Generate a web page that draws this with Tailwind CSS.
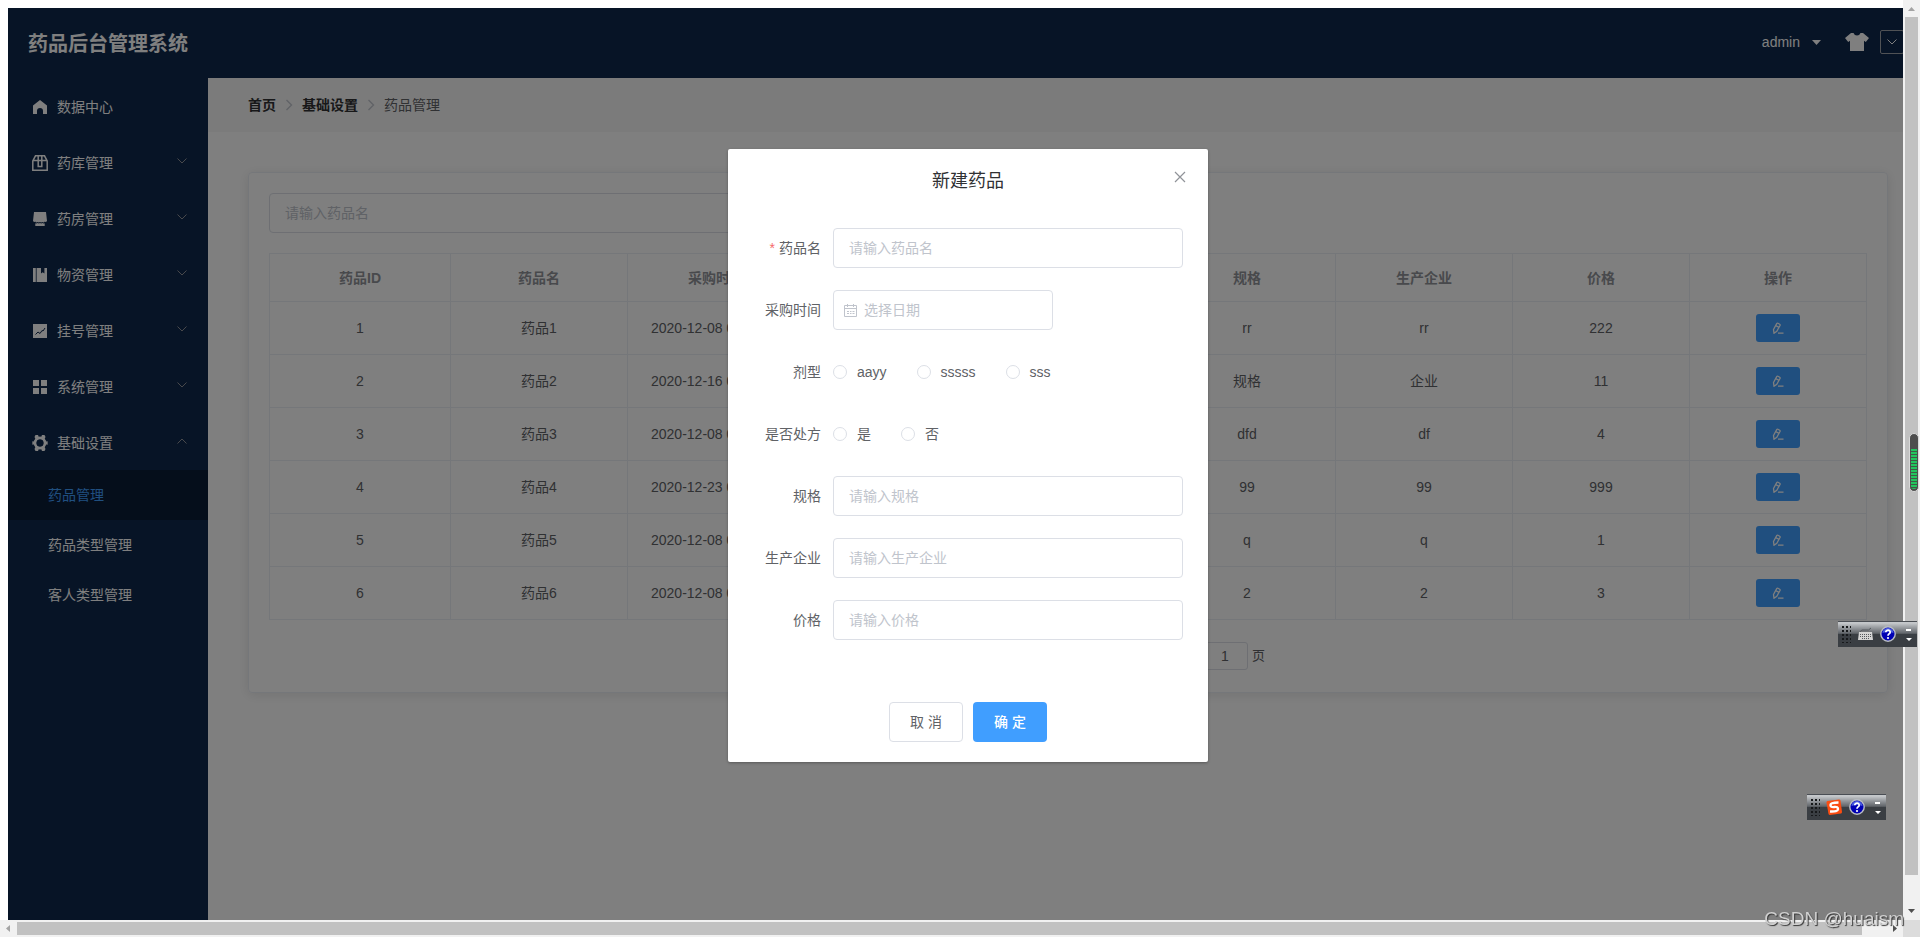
<!DOCTYPE html>
<html lang="zh-CN">
<head>
<meta charset="utf-8">
<title>药品后台管理系统</title>
<script src="https://cdn.jsdelivr.net/npm/@tailwindcss/browser@4"></script>
</head>
<body class="grid h-screen grid-cols-[minmax(0,1fr)_17px] grid-rows-[minmax(0,1fr)_17px] overflow-hidden bg-white font-['Liberation_Sans','Noto_Sans_CJK_SC',sans-serif] text-sm text-[#606266]">

<svg class="hidden" aria-hidden="true">
  <symbol id="down" viewBox="0 0 12 12"><path d="M1.500 3.500 6 8l4.500-4.500" fill="none" stroke="currentColor"/></symbol>
  <symbol id="right" viewBox="0 0 12 12"><path d="M3.500 1 8.500 6l-5 5" fill="none" stroke="currentColor" stroke-width="1.300"/></symbol>
  <symbol id="edit" viewBox="0 0 12 12"><path d="M1.500 7.500 4.700 1.600Q5.200.9 5.900 1.300L7.700 2.300Q8.400 2.700 8 3.500L4.800 9.200 2 11.200ZM3.800 3.600 6.800 5.300M6 11.200h5.500" fill="none" stroke="currentColor" stroke-width="1.300"/></symbol>
  <symbol id="help" viewBox="0 0 16 16"><circle cx="8" cy="8" r="7.200" fill="#0000b4" stroke="#b9bdc4" stroke-width="1.400"/><path d="M2.500 7a5.500 5 0 0 1 11 0Q8 5 2.500 7Z" fill="#4a5ce0"/><path d="M5.800 6.200a2.200 2 0 1 1 3.400 1.600Q8 8.500 8 9.800" fill="none" stroke="#fff" stroke-width="1.700"/><circle cx="8" cy="12" r="1.100" fill="#fff"/></symbol>
  <symbol id="grip" viewBox="0 0 9 17"><g fill="none" stroke="#17191b" stroke-width="2" stroke-dasharray="2 2"><path d="M1 0v17M5 0v17"/><path d="M8.500 0v17" stroke-width="1"/></g></symbol>
  <symbol id="menu" viewBox="0 0 6 13"><path d="M0 1h5v2H0zM0 10h6L3 13z" fill="#fff"/></symbol>
</svg>

<div class="overflow-hidden pt-2 pl-2">
  <div class="relative flex h-full w-screen flex-col bg-white">
    <header class="flex h-[70px] shrink-0 items-center bg-[#0e284c] pr-6 pb-[2px] pl-5 text-white">
      <h1 class="flex-1 pt-1 text-xl font-bold">药品后台管理系统</h1>
      <button class="mr-6 flex items-center gap-3" type="button">admin
        <svg class="h-[5px] w-[9px]" viewBox="0 0 9 5"><path d="M0 0h9L4.500 5z" fill="currentColor"/></svg>
      </button>
      <svg class="mr-[11px] h-[18px] w-6" viewBox="0 0 24 18" fill="currentColor"><path d="M6 0h2.500Q9.500 2.500 12 2.500T15.500 0H18l6 5-3.200 4L19 7.800V18H5V7.800L3.200 9 0 5Z"/></svg>
      <button class="flex h-6 w-6 items-center justify-center rounded-xs border border-[#a0a4aa]" type="button" aria-label="主题"><svg class="size-3"><use href="#down"/></svg></button>
    </header>

    <div class="flex min-h-0 flex-1">
      <aside class="w-[200px] shrink-0 bg-[#0e284c] text-white">
        <nav>
          <a href="#" class="flex h-14 items-center gap-[5px] px-5 pt-px"><svg class="size-6" viewBox="0 0 24 24" fill="currentColor"><path d="M12 5l7 5.500V19h-4v-3a3 3 0 0 0-6 0v3H5v-8.500z"/></svg>数据中心</a>
          <a href="#" class="flex h-14 items-center gap-[5px] px-5 pt-px"><svg class="size-6" viewBox="0 0 24 24" fill="none" stroke="currentColor" stroke-width="1.500"><path d="M4.800 10v9.200h14.400V10L16.500 4.800h-9zM4.800 9.500h14.400M10.200 5v10.500h3.600V5"/></svg><span class="flex-1">药库管理</span><svg class="mb-1 size-3 text-[#909399]"><use href="#down"/></svg></a>
          <a href="#" class="flex h-14 items-center gap-[5px] px-5 pt-px"><svg class="size-6" viewBox="0 0 24 24" fill="currentColor"><path d="M6 5h12l1 9q-1.200 1.600-2.400.6V15q-1.200.9-2.300 0-1.200.9-2.300 0-1.200.9-2.300 0-1.200.9-2.300 0v-.4Q6.200 15.600 5 14zM7.300 16.200q1.300.6 2.300-.2 1.200.9 2.400 0 1.200.9 2.400 0 1 .8 2.300.2V19H7.300z"/></svg><span class="flex-1">药房管理</span><svg class="mb-1 size-3 text-[#909399]"><use href="#down"/></svg></a>
          <a href="#" class="flex h-14 items-center gap-[5px] px-5 pt-px"><svg class="size-6" viewBox="0 0 24 24" fill="currentColor"><path d="M5 5h2.800v14H5zM8.600 5H13v5.500l1.700-1.200 1.700 1.200V5H19v14H8.600z"/></svg><span class="flex-1">物资管理</span><svg class="mb-1 size-3 text-[#909399]"><use href="#down"/></svg></a>
          <a href="#" class="flex h-14 items-center gap-[5px] px-5 pt-px"><svg class="size-6" viewBox="0 0 24 24"><path d="M5 5h14v14H5z" fill="currentColor"/><path d="M7.500 15.500l2.500-2.500 2 1.500 2-3 1 .5L17 9" fill="none" stroke="#0e284c"/></svg><span class="flex-1">挂号管理</span><svg class="mb-1 size-3 text-[#909399]"><use href="#down"/></svg></a>
          <a href="#" class="flex h-14 items-center gap-[5px] px-5 pt-px"><svg class="size-6" viewBox="0 0 24 24" fill="currentColor"><path d="M5 5h6v6H5zM13 5h6v6h-6zM5 13h6v6H5zM13 13h6v6h-6z"/></svg><span class="flex-1">系统管理</span><svg class="mb-1 size-3 text-[#909399]"><use href="#down"/></svg></a>
          <a href="#" class="flex h-14 items-center gap-[5px] px-5 pt-px"><svg class="size-6" viewBox="0 0 24 24"><circle cx="12" cy="12" r="4.900" fill="none" stroke="currentColor" stroke-width="3"/><path d="M7.500 4h2.500l.8 2h2.400l.8-2h2.500l1 2-1 2H7.500l-1-2zM7.500 20h2.500l.8-2h2.400l.8 2h2.500l1-2-1-2H7.500l-1 2zM4 10.500h3v3H4l.5-1.500zM20 10.500h-3v3h3l-.5-1.500z" fill="currentColor"/><circle cx="12" cy="12" r="3.500" fill="#0e284c"/></svg><span class="flex-1">基础设置</span><svg class="mb-1 size-3 rotate-180 text-[#909399]"><use href="#down"/></svg></a>
          <a href="#" class="flex h-[50px] items-center bg-[#0a1c36] pl-10 text-[#409eff]">药品管理</a>
          <a href="#" class="flex h-[50px] items-center pl-10">药品类型管理</a>
          <a href="#" class="flex h-[50px] items-center pl-10">客人类型管理</a>
        </nav>
      </aside>

      <main class="min-w-0 flex-1">
        <nav class="flex h-[54px] items-center bg-[#f6f6f6] px-10" aria-label="面包屑">
          <a href="#" class="font-bold text-[#303133]">首页</a>
          <svg class="mx-[7px] size-3 text-[#c0c4cc]"><use href="#right"/></svg>
          <a href="#" class="font-bold text-[#303133]">基础设置</a>
          <svg class="mx-[7px] size-3 text-[#c0c4cc]"><use href="#right"/></svg>
          <span>药品管理</span>
        </nav>

        <section class="m-10 rounded-sm border border-[#ebeef5] px-5 pt-5 pb-[22px] shadow-[0_2px_12px_rgba(0,0,0,0.1)]">
          <input class="mb-5 block h-10 w-1/2 rounded-sm border border-[#dcdfe6] px-[15px] placeholder:text-[#c0c4cc]" type="text" aria-label="药品名" placeholder="请输入药品名">
          <table class="w-full table-fixed border-collapse text-center [&_button]:inline-flex [&_button]:h-7 [&_button]:w-11 [&_button]:items-center [&_button]:justify-center [&_button]:rounded-[3px] [&_button]:bg-[#409eff] [&_button]:align-middle [&_button]:text-white [&_svg]:size-3 [&_td]:border [&_td]:border-[#ebeef5] [&_th]:border [&_th]:border-[#ebeef5]">
            <colgroup><col class="w-[181px]"><col><col><col><col><col><col><col><col></colgroup>
            <thead><tr class="h-12 text-[#909399]"><th>药品ID</th><th>药品名</th><th>采购时间</th><th>剂型</th><th>是否处方</th><th>规格</th><th>生产企业</th><th>价格</th><th>操作</th></tr></thead>
            <tbody>
              <tr class="h-[53px]"><td>1</td><td>药品1</td><td>2020-12-08 00:00:00</td><td>aayy</td><td>是</td><td>rr</td><td>rr</td><td>222</td><td><button type="button" aria-label="编辑"><svg><use href="#edit"/></svg></button></td></tr>
              <tr class="h-[53px]"><td>2</td><td>药品2</td><td>2020-12-16 00:00:00</td><td>aayy</td><td>是</td><td>规格</td><td>企业</td><td>11</td><td><button type="button" aria-label="编辑"><svg><use href="#edit"/></svg></button></td></tr>
              <tr class="h-[53px]"><td>3</td><td>药品3</td><td>2020-12-08 00:00:00</td><td>aayy</td><td>是</td><td>dfd</td><td>df</td><td>4</td><td><button type="button" aria-label="编辑"><svg><use href="#edit"/></svg></button></td></tr>
              <tr class="h-[53px]"><td>4</td><td>药品4</td><td>2020-12-23 00:00:00</td><td>sssss</td><td>否</td><td>99</td><td>99</td><td>999</td><td><button type="button" aria-label="编辑"><svg><use href="#edit"/></svg></button></td></tr>
              <tr class="h-[53px]"><td>5</td><td>药品5</td><td>2020-12-08 00:00:00</td><td>sss</td><td>是</td><td>q</td><td>q</td><td>1</td><td><button type="button" aria-label="编辑"><svg><use href="#edit"/></svg></button></td></tr>
              <tr class="h-[53px]"><td>6</td><td>药品6</td><td>2020-12-08 00:00:00</td><td>sss</td><td>否</td><td>2</td><td>2</td><td>3</td><td><button type="button" aria-label="编辑"><svg><use href="#edit"/></svg></button></td></tr>
            </tbody>
          </table>
          <div class="mx-auto mt-[22px] flex h-7 w-[394px] items-center justify-end text-[13px]">
            <label class="flex items-center gap-1">前往<input class="h-7 w-[46px] rounded-[3px] border border-[#dcdfe6] text-center text-sm" type="text" value="1">页</label>
          </div>
        </section>
      </main>
    </div>

    <div class="absolute inset-0 bg-black/50">
      <form class="mx-auto mt-[141px] w-[480px] rounded-xs bg-white py-5 shadow-[0_1px_3px_rgba(0,0,0,0.3)]" role="dialog" aria-labelledby="dialog-title">
        <div class="relative mb-[35px] text-center">
          <h2 id="dialog-title" class="text-lg leading-6 text-[#303133]">新建药品</h2>
          <button class="absolute top-0 right-5 text-[#909399]" type="button" aria-label="关闭"><svg class="size-4" viewBox="0 0 16 16"><path d="M3 3l10 10M13 3 3 13" fill="none" stroke="currentColor" stroke-width="1.200"/></svg></button>
        </div>
        <div class="grid grid-cols-[68px_350px] items-center justify-end gap-x-3 gap-y-[22px] pr-[25px] [&_input[type=radio]]:size-[14px] [&_input[type=radio]]:appearance-none [&_input[type=radio]]:rounded-full [&_input[type=radio]]:border [&_input[type=radio]]:border-[#dcdfe6] [&_input[type=text]]:h-10 [&_input[type=text]]:rounded-sm [&_input[type=text]]:border [&_input[type=text]]:border-[#dcdfe6] [&_input[type=text]]:px-[15px] [&_input[type=text]]:placeholder:text-[#c0c4cc]">
          <label class="text-right" for="name"><span class="mr-1 text-[#f56c6c]">*</span>药品名</label>
          <input id="name" type="text" placeholder="请输入药品名">
          <label class="text-right" for="date">采购时间</label>
          <div class="flex h-10 w-[220px] items-center gap-[7px] rounded-sm border border-[#dcdfe6] pl-[10px]">
            <svg class="size-[13px] shrink-0 text-[#c0c4cc]" viewBox="0 0 13 13" fill="none" stroke="currentColor"><path d="M.5 1.500h12v11H.5zM.5 4.500h12M3.500 0v3M9.500 0v3M3 7.500h2M6 7.500h1.500M8.500 7.500h2M3 9.500h2M6 9.500h1.500M8.500 9.500h2"/></svg>
            <input id="date" class="w-full min-w-0 border-0! px-0! outline-none" type="text" placeholder="选择日期">
          </div>
          <span class="text-right">剂型</span>
          <div class="flex h-10 items-center gap-[30px]">
            <label class="flex items-center gap-[10px]"><input type="radio" name="type">aayy</label>
            <label class="flex items-center gap-[10px]"><input type="radio" name="type">sssss</label>
            <label class="flex items-center gap-[10px]"><input type="radio" name="type">sss</label>
          </div>
          <span class="text-right">是否处方</span>
          <div class="flex h-10 items-center gap-[30px]">
            <label class="flex items-center gap-[10px]"><input type="radio" name="rx">是</label>
            <label class="flex items-center gap-[10px]"><input type="radio" name="rx">否</label>
          </div>
          <label class="text-right" for="spec">规格</label>
          <input id="spec" type="text" placeholder="请输入规格">
          <label class="text-right" for="maker">生产企业</label>
          <input id="maker" type="text" placeholder="请输入生产企业">
          <label class="text-right" for="price">价格</label>
          <input id="price" type="text" placeholder="请输入价格">
        </div>
        <div class="mt-[62px] flex justify-center gap-[10px]">
          <button class="h-10 w-[74px] rounded-sm border border-[#dcdfe6]" type="button">取 消</button>
          <button class="h-10 w-[74px] rounded-sm bg-[#409eff] font-medium text-white" type="submit">确 定</button>
        </div>
      </form>
    </div>
  </div>
</div>

<!-- Vertical scroll bar -->
<div class="flex flex-col items-center bg-[#f1f1f1]">
  <svg class="h-[17px] w-[17px] shrink-0 text-[#a3a3a3]" viewBox="0 0 17 17"><path d="M5 11h7L8.500 7z" fill="currentColor"/></svg>
  <div class="w-[13px] flex-1 bg-[#c1c1c1]"></div>
  <svg class="mt-7 h-[17px] w-[17px] shrink-0 text-[#505050]" viewBox="0 0 17 17"><path d="M5 6h7l-3.500 4z" fill="currentColor"/></svg>
</div>
<!-- Horizontal scroll bar -->
<div class="flex items-center bg-[#f1f1f1]">
  <svg class="h-[17px] w-[17px] shrink-0 text-[#a3a3a3]" viewBox="0 0 17 17"><path d="M10 5v7L6 8.500z" fill="currentColor"/></svg>
  <div class="h-[13px] flex-1 bg-[#c1c1c1]"></div>
  <svg class="ml-6 h-[17px] w-[17px] shrink-0 text-[#505050]" viewBox="0 0 17 17"><path d="M7 5v7l4-3.500z" fill="currentColor"/></svg>
</div>
<div class="bg-[#dcdcdc]"></div>

<!-- Desktop widgets floating over the window -->
<div class="fixed top-[621px] right-[3px] flex h-[26px] w-[79px] items-center border-t border-[#4a4e54] bg-linear-to-b from-[#c4c7ca] from-5% via-[#62666b] via-45% to-[#3a3e43] to-50% pr-[5px] pb-px pl-1">
  <svg class="mr-[7px] h-[17px] w-[9px]"><use href="#grip"/></svg>
  <svg class="mr-[7px] h-[14px] w-[15px]" viewBox="0 0 15 14"><path d="M2 5Q3 2 7 3t6-2" fill="none" stroke="#55595e"/><path d="M1 5h13l1 8H0z" fill="#d4d4d4"/><path d="M2 7.500h11M2 9.500h11M4 11.500h7" fill="none" stroke="#55595e" stroke-dasharray="1 1"/></svg>
  <svg class="mr-auto size-4"><use href="#help"/></svg>
  <svg class="h-[13px] w-[6px]"><use href="#menu"/></svg>
</div>
<div class="fixed top-[794px] right-[34px] flex h-[26px] w-[79px] items-center border-t border-[#4a4e54] bg-linear-to-b from-[#c4c7ca] from-5% via-[#62666b] via-45% to-[#3a3e43] to-50% pr-[5px] pb-px pl-1">
  <svg class="mr-[6px] h-[17px] w-[9px]"><use href="#grip"/></svg>
  <svg class="mr-[7px] size-4" viewBox="0 0 16 16"><path d="M1.500 2 13 .5q1.200 0 1.500 1L16 13q0 1.200-1 1.500L4 16q-1.200 0-1.500-1L.5 3.500q0-1.200 1-1.500z" fill="#fb4d12"/><path d="M12.500 3.500Q4.500 3.500 4.500 6t3.800 2T12 10.200t-8 2.300" fill="none" stroke="#fff" stroke-width="2.400"/></svg>
  <svg class="mr-auto size-4"><use href="#help"/></svg>
  <svg class="h-[13px] w-[6px]"><use href="#menu"/></svg>
</div>
<div class="fixed top-[433px] right-px flex h-[59px] w-[10px] flex-col justify-end rounded-full border border-[#d8d8d8] bg-[#4d4d4d] p-px pb-[2px]">
  <div class="h-10 rounded-b-sm bg-[repeating-linear-gradient(to_bottom,#22c55e_0_2px,#3f5a46_2px_3px)]"></div>
</div>
<div class="fixed right-4 bottom-[6px] text-[19px] leading-6 text-[#d0d0d0] [text-shadow:1px_1px_1px_#333]">CSDN @huaism</div>
</body>
</html>
